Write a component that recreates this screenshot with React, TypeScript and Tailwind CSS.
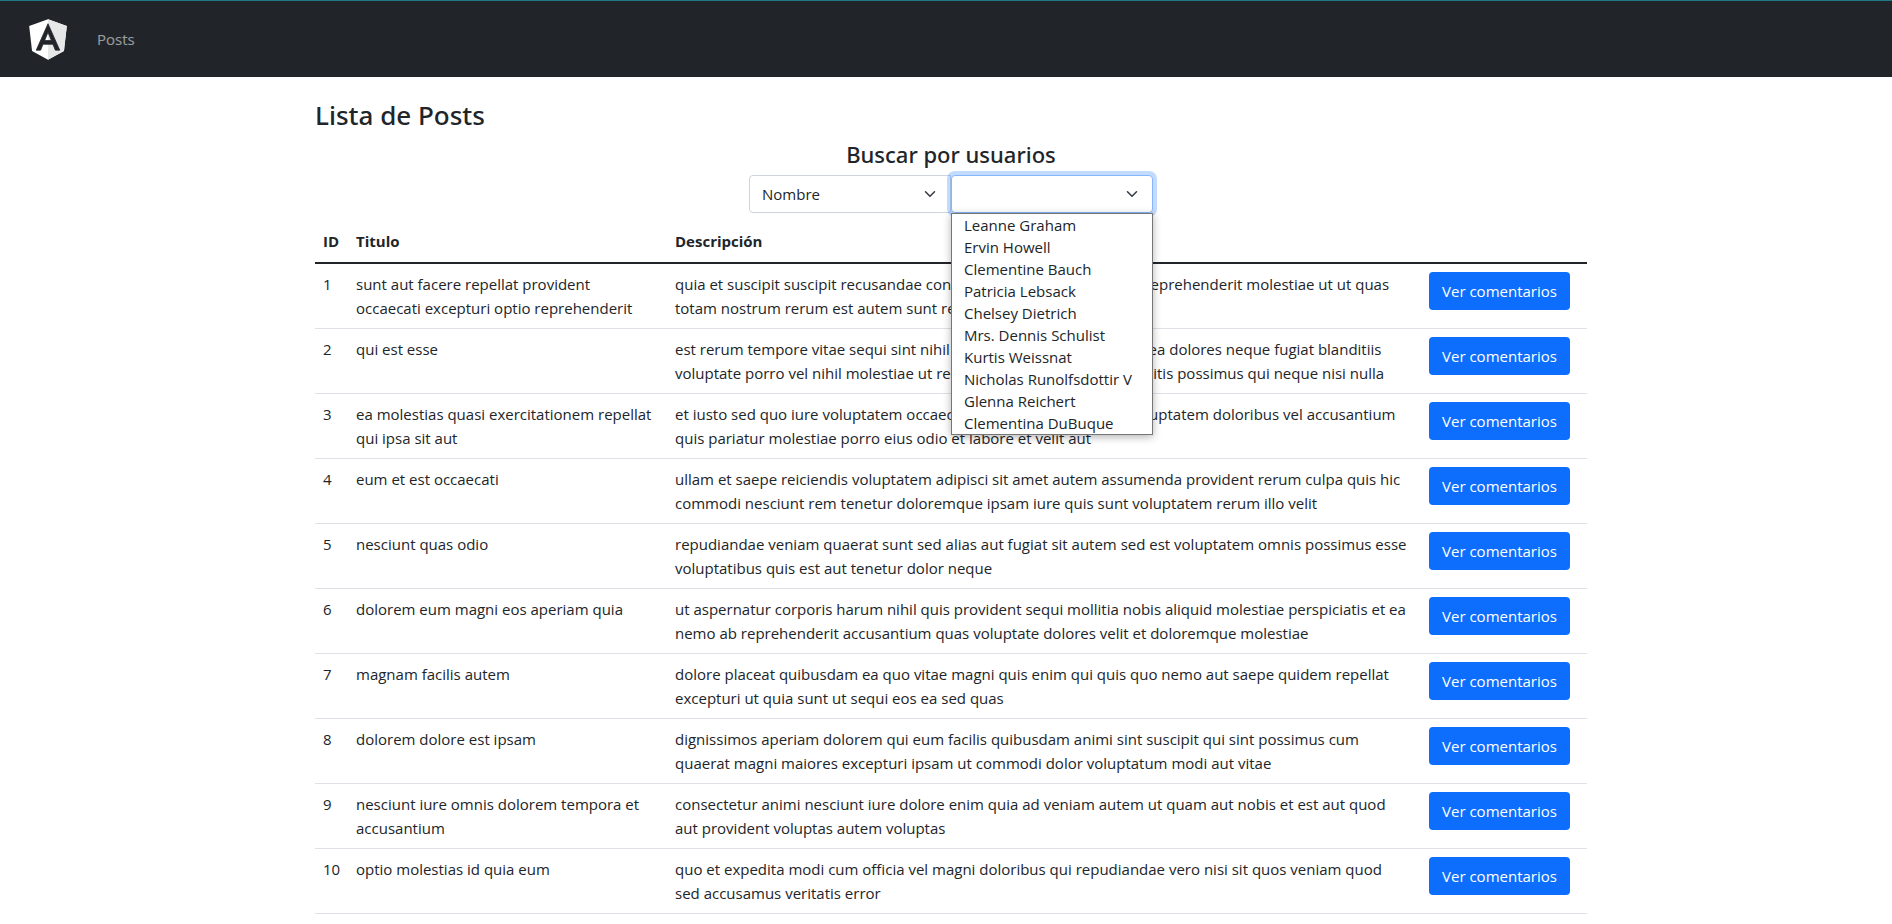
import { useState } from "react";

type Post = { id: number; title: string; body: string };

const users = [
  "Leanne Graham",
  "Ervin Howell",
  "Clementine Bauch",
  "Patricia Lebsack",
  "Chelsey Dietrich",
  "Mrs. Dennis Schulist",
  "Kurtis Weissnat",
  "Nicholas Runolfsdottir V",
  "Glenna Reichert",
  "Clementina DuBuque",
];

const posts: Post[] = [
  { id: 1, title: "sunt aut facere repellat provident occaecati excepturi optio reprehenderit", body: "quia et suscipit suscipit recusandae consequuntur expedita et cum reprehenderit molestiae ut ut quas totam nostrum rerum est autem sunt rem eveniet architecto" },
  { id: 2, title: "qui est esse", body: "est rerum tempore vitae sequi sint nihil reprehenderit dolor beatae ea dolores neque fugiat blanditiis voluptate porro vel nihil molestiae ut reiciendis qui aperiam non debitis possimus qui neque nisi nulla" },
  { id: 3, title: "ea molestias quasi exercitationem repellat qui ipsa sit aut", body: "et iusto sed quo iure voluptatem occaecati omnis eligendi aut ad voluptatem doloribus vel accusantium quis pariatur molestiae porro eius odio et labore et velit aut" },
  { id: 4, title: "eum et est occaecati", body: "ullam et saepe reiciendis voluptatem adipisci sit amet autem assumenda provident rerum culpa quis hic commodi nesciunt rem tenetur doloremque ipsam iure quis sunt voluptatem rerum illo velit" },
  { id: 5, title: "nesciunt quas odio", body: "repudiandae veniam quaerat sunt sed alias aut fugiat sit autem sed est voluptatem omnis possimus esse voluptatibus quis est aut tenetur dolor neque" },
  { id: 6, title: "dolorem eum magni eos aperiam quia", body: "ut aspernatur corporis harum nihil quis provident sequi mollitia nobis aliquid molestiae perspiciatis et ea nemo ab reprehenderit accusantium quas voluptate dolores velit et doloremque molestiae" },
  { id: 7, title: "magnam facilis autem", body: "dolore placeat quibusdam ea quo vitae magni quis enim qui quis quo nemo aut saepe quidem repellat excepturi ut quia sunt ut sequi eos ea sed quas" },
  { id: 8, title: "dolorem dolore est ipsam", body: "dignissimos aperiam dolorem qui eum facilis quibusdam animi sint suscipit qui sint possimus cum quaerat magni maiores excepturi ipsam ut commodi dolor voluptatum modi aut vitae" },
  { id: 9, title: "nesciunt iure omnis dolorem tempora et accusantium", body: "consectetur animi nesciunt iure dolore enim quia ad veniam autem ut quam aut nobis et est aut quod aut provident voluptas autem voluptas" },
  { id: 10, title: "optio molestias id quia eum", body: "quo et expedita modi cum officia vel magni doloribus qui repudiandae vero nisi sit quos veniam quod sed accusamus veritatis error" },
];

function Logo() {
  return (
    <svg viewBox="31 30 188 200" className="h-[41px] w-[38px]" role="img" aria-label="Angular">
      <path fill="#fff" d="M125 30 31.9 63.2l14.2 123.1L125 230l78.9-43.7 14.2-123.1z" />
      <path fill="#e6e8e8" d="M125 30v200l78.9-43.7 14.2-123.1z" />
      <path
        fill="#212529"
        stroke="#212529"
        strokeWidth="4"
        d="M125 52.1 66.8 182.6h21.7l11.7-29.2h49.4l11.7 29.2H183L125 52.1zm17 83.3h-34l17-40.9 17 40.9z"
      />
    </svg>
  );
}

function Chevron() {
  return (
    <svg
      viewBox="0 0 16 16"
      aria-hidden="true"
      className="pointer-events-none absolute top-[13px] right-[13px] h-3 w-4 fill-none stroke-[#343a40] stroke-2"
    >
      <path strokeLinecap="round" strokeLinejoin="round" d="m2 5 6 6 6-6" />
    </svg>
  );
}

function Navbar() {
  return (
    <nav className="flex items-center gap-[30px] border-t border-[#1f7a86] bg-[#212529] pt-[18px] pb-[17px] pl-[29px]">
      <a href="#inicio">
        <Logo />
      </a>
      <a href="#posts" className="pb-0.5 text-white/55">
        Posts
      </a>
    </nav>
  );
}

function UserSearch() {
  const [field, setField] = useState("Nombre");
  const [user, setUser] = useState("");
  const [open, setOpen] = useState(true);

  return (
    <section className="flex flex-col items-center">
      <h4 className="mb-1.5 font-['Noto_Sans','Open_Sans',sans-serif] text-[22px] leading-[29px] font-medium">
        Buscar por usuarios
      </h4>
      <div className="flex">
        <div className="relative w-[202px]">
          <select
            aria-label="Campo de búsqueda"
            value={field}
            onChange={(e) => setField(e.target.value)}
            className="h-[38px] w-full appearance-none rounded-l border border-[#ced4da] bg-white px-3 leading-6 outline-none"
          >
            <option>Nombre</option>
          </select>
          <Chevron />
        </div>
        <div className="relative w-[202px]">
          <select
            aria-label="Usuario"
            value={user}
            onChange={(e) => setUser(e.target.value)}
            className="h-[38px] w-full appearance-none rounded border border-[#86b7fe] bg-white px-3 leading-6 ring-4 ring-[#0d6efd]/25 outline-none"
          >
            <option value="" />
            {users.map((name) => (
              <option key={name}>{name}</option>
            ))}
          </select>
          <Chevron />
          {open && (
            <ul
              role="listbox"
              aria-label="Usuarios"
              className="absolute top-full left-0 z-10 w-full border border-[#767676] bg-white shadow-[0_2px_8px_rgba(0,0,0,0.3)]"
            >
              {users.map((name) => (
                <li
                  key={name}
                  role="option"
                  aria-selected={name === user}
                  onClick={() => {
                    setUser(name);
                    setOpen(false);
                  }}
                  className="h-[22px] pl-3 leading-[22px] whitespace-nowrap"
                >
                  {name}
                </li>
              ))}
            </ul>
          )}
        </div>
      </div>
    </section>
  );
}

function PostTable() {
  return (
    <table className="mt-2 w-full table-fixed border-collapse text-left align-top">
      <colgroup>
        <col className="w-[33px]" />
        <col className="w-[319px]" />
        <col />
        <col className="w-[166px]" />
      </colgroup>
      <thead>
        <tr className="border-b-2 border-[#212529]">
          <th className="px-2 pt-2 pb-[9px] font-bold">ID</th>
          <th className="px-2 pt-2 pb-[9px] font-bold">Titulo</th>
          <th className="px-2 pt-2 pb-[9px] font-bold">Descripción</th>
          <th className="px-2 pt-2 pb-[9px]" aria-label="Acciones" />
        </tr>
      </thead>
      <tbody>
        {posts.map((post) => (
          <tr key={post.id} className="border-b border-[#dee2e6] align-top">
            <td className="py-2 pl-2">{post.id}</td>
            <td className="py-2 pr-3 pl-2">{post.title}</td>
            <td className="py-2 pr-3 pl-2">{post.body}</td>
            <td className="p-2">
              <button type="button" className="h-[38px] w-[141px] rounded bg-[#0d6efd] text-white">
                Ver comentarios
              </button>
            </td>
          </tr>
        ))}
      </tbody>
    </table>
  );
}

export default function App() {
  return (
    <div className="min-h-screen bg-white font-['Open_Sans','Noto_Sans',sans-serif] text-[15px] leading-6 text-[#212529]">
      <Navbar />
      <div className="pl-2.5">
        <main className="mx-auto max-w-[1272px] pt-[22px]">
          <h3 className="mb-2 font-['Noto_Sans','Open_Sans',sans-serif] text-[26px] leading-[33px] font-medium">
            Lista de Posts
          </h3>
          <UserSearch />
          <PostTable />
        </main>
      </div>
    </div>
  );
}
